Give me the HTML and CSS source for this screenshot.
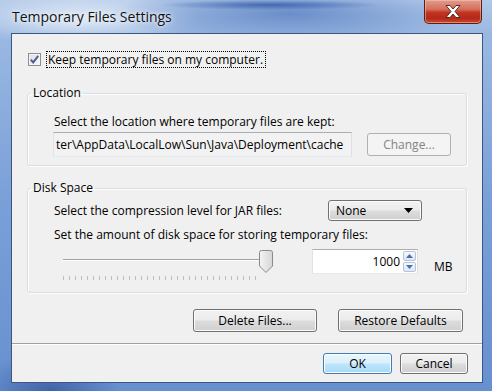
FILE: index.html
```html
<!DOCTYPE html>
<html>
<head>
<meta charset="utf-8">
<title>Temporary Files Settings</title>
<link rel="stylesheet" href="styles.css">
</head>
<body>
<div class="window">
  <div class="titlebar">
    <span class="title">Temporary Files Settings</span>
    <div class="close">
      <svg width="16" height="13" viewBox="0 0 16 13"><path d="M1 0.5 L5 0.5 L8 4 L11 0.5 L15 0.5 L10 6.5 L15 12.5 L11 12.5 L8 9 L5 12.5 L1 12.5 L6 6.5 Z" fill="#ffffff" stroke="#5a2a24" stroke-width="1" stroke-linejoin="round"/></svg>
    </div>
  </div>
  <div class="client">
    <div class="keep">
      <span class="checkbox">
        <svg width="9" height="9" viewBox="0 0 9 9"><path d="M0.8 4.6 L3.2 7.4 L8.2 0.8" fill="none" stroke="#4a5f97" stroke-width="2"/></svg>
      </span>
      <span class="focus">Keep temporary files on my computer.</span>
    </div>

    <fieldset class="group location">
      <legend>Location</legend>
      <div class="group-body">
        <div class="line">Select the location where temporary files are kept:</div>
        <div class="path-row">
          <div class="textfield path">ter\AppData\LocalLow\Sun\Java\Deployment\cache</div>
          <div class="btn disabled change">Change...</div>
        </div>
      </div>
    </fieldset>

    <fieldset class="group disk">
      <legend>Disk Space</legend>
      <div class="group-body">
        <div class="compress-row">
          <span class="compress-label">Select the compression level for JAR files:</span>
          <div class="combo">
            <span>None</span>
            <svg width="9" height="5" viewBox="0 0 9 5"><path d="M0 0 H9 L4.5 5 Z" fill="#000"/></svg>
          </div>
        </div>
        <div class="line amount">Set the amount of disk space for storing temporary files:</div>
        <div class="size-row">
          <div class="slider">
            <div class="track"></div>
            <svg class="thumb" width="14" height="23" viewBox="0 0 14 23">
              <defs>
                <linearGradient id="tg" x1="0" y1="0" x2="1" y2="0">
                  <stop offset="0" stop-color="#f4f4f4"/>
                  <stop offset="1" stop-color="#d6d6d6"/>
                </linearGradient>
              </defs>
              <path d="M0.5 2.5 Q0.5 0.5 2.5 0.5 H11.5 Q13.5 0.5 13.5 2.5 V16 L7 22.5 L0.5 16 Z" fill="url(#tg)" stroke="#8a8a8a"/>
            </svg>
            <div class="ticks"></div>
          </div>
          <div class="spinner">
            <span class="value">1000</span>
            <div class="spins">
              <span class="spin up"><svg width="7" height="4" viewBox="0 0 7 4"><path d="M0 4 L3.5 0 L7 4 Z" fill="#4d6fb0"/></svg></span>
              <span class="spin down"><svg width="7" height="4" viewBox="0 0 7 4"><path d="M0 0 L3.5 4 L7 0 Z" fill="#4d6fb0"/></svg></span>
            </div>
          </div>
          <span class="unit">MB</span>
        </div>
      </div>
    </fieldset>

    <div class="actions">
      <div class="btn delete">Delete Files...</div>
      <div class="btn restore">Restore Defaults</div>
    </div>
    <div class="separator"></div>
    <div class="footer">
      <div class="btn default ok">OK</div>
      <div class="btn cancel">Cancel</div>
    </div>
  </div>
</div>
</body>
</html>
```

FILE: styles.css
```css
* { box-sizing: border-box; }
html, body { margin: 0; padding: 0; }
body {
  width: 492px;
  height: 391px;
  overflow: hidden;
  font-family: "Open Sans", "Noto Sans", sans-serif;
  font-size: 12px;
  color: #000;
}

.window {
  width: 492px;
  height: 391px;
  display: flex;
  flex-direction: column;
  background:
    radial-gradient(ellipse 110px 5px at 270px 5px, rgba(45,85,165,0.75), rgba(45,85,165,0)),
    radial-gradient(ellipse 180px 30px at 290px 14px, rgba(80,120,190,0.7), rgba(80,120,190,0)),
    radial-gradient(ellipse 120px 28px at 80px 18px, rgba(228,236,246,0.95), rgba(228,236,246,0)),
    radial-gradient(ellipse 70px 40px at 50px 391px, rgba(40,70,140,0.6), rgba(40,70,140,0)),
    linear-gradient(180deg, #b2c9e9 0px, #9ab8e2 33px, #7aa0d8 200px, #6790cf 391px);
}

.titlebar {
  height: 33px;
  display: flex;
  align-items: flex-start;
  padding: 0 10px 0 12px;
}
.title {
  font-size: 14px;
  line-height: 20px;
  margin-top: 7px;
  color: #111;
  text-shadow: 0 0 6px #eef4fb, 0 0 3px #eef4fb;
}
.close {
  margin-left: auto;
  width: 58px;
  height: 24px;
  border: 1px solid #5e1d12;
  border-top: none;
  border-radius: 0 0 5px 5px;
  background: linear-gradient(180deg, #e29c8d 0%, #d56f5d 40%, #c2341f 55%, #b3291a 80%, #cf4a2f 100%);
  box-shadow: inset 0 0 0 1px rgba(255,200,190,0.5);
  display: flex;
  align-items: center;
  justify-content: center;
}

.client {
  flex: 1;
  margin: 0 9px 8px 11px;
  border: 1px solid #3c5680;
  background: #f0f0f0;
  display: flex;
  flex-direction: column;
}

.keep {
  display: flex;
  align-items: center;
  margin: 18px 0 0 16px;
  height: 15px;
}
.checkbox {
  width: 13px;
  height: 13px;
  border: 1px solid #8e8f8f;
  background: linear-gradient(135deg, #dcdcdc, #fbfbfb);
  box-shadow: inset 0 0 0 1px #f4f4f4;
  display: flex;
  align-items: center;
  justify-content: center;
}
.focus {
  margin-left: 6px;
  outline: 1px dotted #000;
  line-height: 15px;
  padding: 0 2px 0 1px;
}

.group {
  margin: 0 15px 0 15px;
  padding: 0;
  border: 1px solid #d5dfe5;
  border-radius: 3px;
  box-shadow: inset 1px 1px 0 #fff, 1px 1px 0 #fff;
  min-width: 0;
}
.group legend {
  margin-left: 3px;
  padding: 0 2px;
  line-height: 16px;
}
.location { margin-top: 18px; }
.disk { margin-top: 14px; }

.group-body {
  padding: 13px 0 8px 26px;
}
.disk .group-body { padding: 3px 0 10px 26px; }

.line { line-height: 16px; }

.path-row {
  display: flex;
  align-items: center;
  margin-top: 2px;
  margin-left: -1px;
}
.textfield {
  height: 25px;
  border: 1px solid #abadb3;
  border-color: #abadb3 #dbdfe6 #e3e9ef #e2e3ea;
}
.path {
  width: 299px;
  background: #f2f2f2;
  line-height: 23px;
  padding-left: 2px;
  white-space: nowrap;
  overflow: hidden;
}

.btn {
  display: flex;
  align-items: center;
  justify-content: center;
  border: 1px solid #707070;
  border-radius: 3px;
  background: linear-gradient(180deg, #f2f2f2 0%, #ebebeb 48%, #dddddd 52%, #cfcfcf 100%);
  box-shadow: inset 0 0 0 1px #fbfbfb;
  white-space: nowrap;
}
.btn.disabled {
  border-color: #adb2b5;
  background: #f4f4f4;
  box-shadow: none;
  color: #838383;
}
.change {
  width: 84px;
  height: 23px;
  margin-left: 15px;
}

.compress-row {
  display: flex;
  align-items: center;
  height: 22px;
}
.compress-label { width: 274px; }
.combo {
  width: 94px;
  height: 21px;
  border: 1px solid #707070;
  border-radius: 3px;
  background: linear-gradient(180deg, #f2f2f2 0%, #ebebeb 48%, #dddddd 52%, #cfcfcf 100%);
  box-shadow: inset 0 0 0 1px #fbfbfb;
  display: flex;
  align-items: center;
  justify-content: space-between;
  padding: 0 8px 0 7px;
}
.amount { margin-top: 6px; }

.size-row {
  display: flex;
  align-items: flex-start;
  margin-top: 6px;
}
.slider {
  margin-left: 9px;
  width: 210px;
  display: grid;
  grid-template-columns: 1fr;
  grid-template-rows: 23px 10px;
}
.track {
  grid-area: 1 / 1;
  margin-top: 10px;
  width: 200px;
  height: 2px;
  border-top: 1px solid #a3a3a3;
  border-bottom: 1px solid #ffffff;
}
.thumb {
  grid-area: 1 / 1;
  justify-self: end;
  margin-top: 1px;
}
.ticks {
  grid-area: 2 / 1;
  margin-top: 4px;
  width: 196px;
  height: 4px;
  background: repeating-linear-gradient(90deg, #bdbdbd 0 1px, transparent 1px 6px);
}

.spinner {
  margin-left: 39px;
  width: 106px;
  height: 25px;
  background: #fff;
  border: 1px solid #abadb3;
  border-color: #abadb3 #dbdfe6 #e3e9ef #e2e3ea;
  display: flex;
  align-items: center;
  justify-content: flex-end;
  padding-right: 1px;
}
.value { margin-right: 3px; }
.spins {
  display: flex;
  flex-direction: column;
  gap: 1px;
}
.spin {
  width: 13px;
  height: 10px;
  border: 1px solid #b7c3d6;
  border-radius: 2px;
  background: linear-gradient(180deg, #f6f9fd, #dde6f3);
  display: flex;
  align-items: center;
  justify-content: center;
}
.unit {
  margin-left: 16px;
  margin-top: 10px;
  line-height: 16px;
}

.actions {
  display: flex;
  justify-content: flex-end;
  gap: 21px;
  margin-top: 16px;
  padding-right: 19px;
}
.delete { width: 124px; height: 23px; }
.restore { width: 125px; height: 23px; }

.separator {
  margin-top: 11px;
  height: 2px;
  border-top: 1px solid #a0a0a0;
  border-bottom: 1px solid #ffffff;
}

.footer {
  display: flex;
  justify-content: flex-end;
  gap: 8px;
  margin-top: 8px;
  padding-right: 14px;
}
.ok, .cancel { height: 21px; }
.ok { width: 69px; }
.cancel { width: 68px; }
.btn.default {
  border-color: #3c7fb1;
  background: linear-gradient(180deg, #eaf6fd 0%, #d9f0fc 48%, #bee6fd 52%, #a7d9f5 100%);
  box-shadow: inset 0 0 0 1px #ffffff;
}
```
